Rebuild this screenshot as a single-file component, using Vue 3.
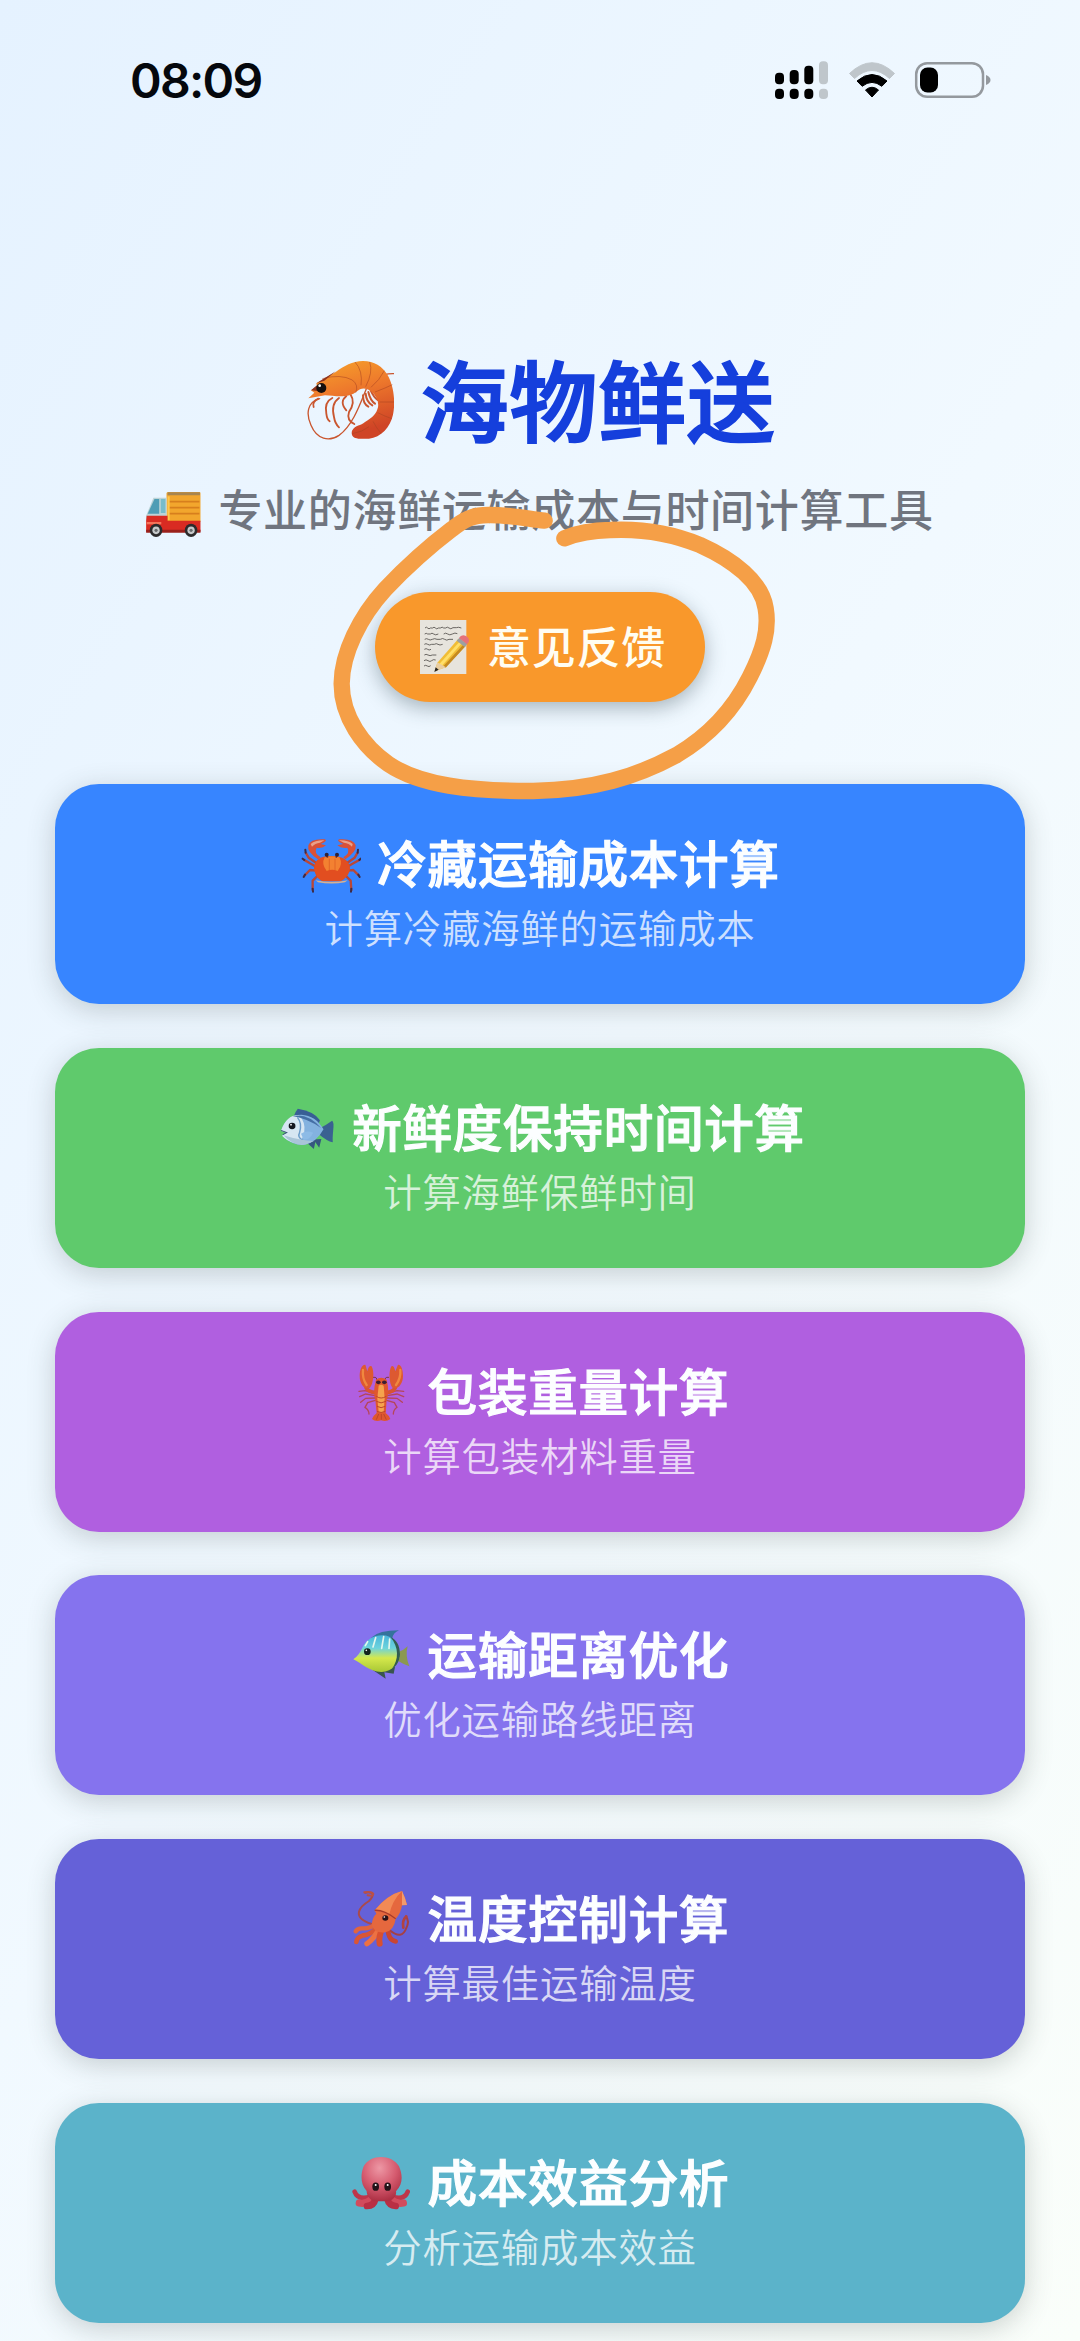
<template>
  <div class="page">
    <div class="status-bar">
      <span class="clock">08:09</span>
      <svg class="status-icons" viewBox="775 60 216 40">
        <g fill="#000">
          <rect x="775" y="72.7" width="9" height="11.500" rx="4" />
          <rect x="789.700" y="70" width="9" height="14.200" rx="4" />
          <rect x="804.300" y="65.700" width="9" height="18.500" rx="4" />
          <rect x="775" y="88.700" width="9" height="10.400" rx="4" />
          <rect x="789.700" y="88.700" width="9" height="10.400" rx="4" />
          <rect x="804.300" y="88.700" width="9" height="10.400" rx="4" />
        </g>
        <g fill="#bfc6cb">
          <rect x="819" y="61.300" width="9" height="22.900" rx="4" />
          <rect x="819" y="88.700" width="9" height="10.400" rx="4" />
          <path d="M849.5 73.5Q872 52 894.500 73.5L889.500 78.500Q872 62.500 854.500 78.500Z" stroke="#bfc6cb" stroke-width="1" stroke-linejoin="round" />
        </g>
        <path d="M857 81Q872 68 887 81L881.800 86.300Q872 78.500 862.200 86.300Z" stroke="#000" stroke-linejoin="round" />
        <path d="M865.500 90Q872 84.500 878.500 90L872 97Z" stroke="#000" stroke-linejoin="round" />
        <rect x="916.200" y="63.200" width="66.800" height="33.600" rx="11" fill="none" stroke="#94999e" stroke-width="2.500" />
        <path d="M986 75Q990.500 77 990.500 80T986 85Z" fill="#94999e" />
        <rect x="920" y="67.500" width="18" height="25" rx="7.500" fill="#000" />
      </svg>
    </div>

    <header class="header">
      <h1 class="title">
        <svg class="title-icon" viewBox="45 55 270 270">
          <defs>
            <linearGradient id="shrimp" x1="0" y1="0" x2="0.3" y2="1">
              <stop offset="0" stop-color="#f7a52b" />
              <stop offset="0.45" stop-color="#ee7a2c" />
              <stop offset="1" stop-color="#cf4426" />
            </linearGradient>
          </defs>
          <g fill="none" stroke="#c9562f" stroke-linecap="round">
            <path d="M92 180C55 190 50 225 66 260C84 303 120 310 150 290C190 262 212 200 232 150C250 118 280 104 315 105" stroke-width="4" />
            <path d="M88 180Q68 190 74 205M130 178Q105 190 112 225Q114 243 122 248M150 178Q125 195 135 235Q138 255 150 266M172 172Q150 190 172 215M185 168Q200 190 180 220Q172 245 196 256" stroke-width="5.500" />
            <path d="M222 170Q222 196 238 204M230 165Q232 190 250 200M238 160Q244 186 258 195M245 155Q254 175 266 184" stroke-width="6" />
          </g>
          <path d="M58 179L76 162L66 155L84 142L82 134L140 100C165 82 190 67 222 67C256 68 280 82 296 110C314 140 320 190 312 228C304 265 276 296 240 300L208 300C190 298 186 289 189 276C200 258 215 262 228 250C252 236 262 226 267 206C270 188 262 172 246 158C230 145 214 148 204 158C180 180 140 172 108 170Z" fill="url(#shrimp)" />
          <path d="M100 120Q155 105 190 124Q210 140 200 162M198 70Q222 96 216 140M242 70Q253 100 230 144M286 96Q272 124 246 146M310 138Q290 148 258 160M316 190Q292 190 272 190M308 240Q286 232 266 222M276 284Q262 268 252 248M190 285Q220 280 240 264" fill="none" stroke="#a94420" stroke-opacity="0.55" stroke-width="3" />
          <path d="M82 134L140 98L106 126ZM66 155L84 140L90 158Z" fill="#8e321d" />
          <ellipse cx="97" cy="148" rx="15" ry="15" fill="#17100e" />
          <circle cx="92" cy="141" r="4" fill="#fff" />
        </svg>
        <span>海物鲜送</span>
      </h1>
      <p class="subtitle">
        <svg class="subtitle-icon" viewBox="27 36 111 171" preserveAspectRatio="none">
          <path d="M72 66Q73 63 76 63H135Q137 63 137 66V152H72Z" fill="#f2a62d" />
          <path d="M74 64H136V73H74Z" fill="#a8854e" />
          <path d="M76 92H135M76 110H135M76 128H135" stroke="#d77f1d" stroke-width="5" />
          <path d="M74 76H78V148H74Z" fill="#ffc84d" />
          <path d="M47 80H72V150H33V134Z" fill="#bcd3d6" />
          <path d="M49 84H58V128H36Z" fill="#4f9db5" />
          <path d="M61 84H70V126H61Z" fill="#78bccb" />
          <path d="M34 134H74V149H137V182H33V150Z" fill="#d92b22" />
          <path d="M34 153H62V160H34Z" fill="#f5745a" />
          <path d="M33 176H137V185H33Z" fill="#9a211c" />
          <g fill="#2c2b2c">
            <ellipse cx="52" cy="178" rx="12" ry="20" />
            <ellipse cx="119" cy="178" rx="12" ry="20" />
          </g>
          <g fill="#c6c9ca">
            <ellipse cx="52" cy="178" rx="7" ry="11.500" />
            <ellipse cx="119" cy="178" rx="7" ry="11.500" />
          </g>
          <g fill="#66696b">
            <ellipse cx="52" cy="178" rx="3" ry="5" />
            <ellipse cx="119" cy="178" rx="3" ry="5" />
          </g>
        </svg>
        <span>专业的海鲜运输成本与时间计算工具</span>
      </p>
      <div class="feedback">
        <button class="feedback-button" type="button">
          <svg class="feedback-icon" viewBox="291 359 162 162">
            <path d="M300 359H439V521H300Z" fill="#e7e4dd" />
            <path d="M315 383q4-5 8 0t8 0h7q4-5 8 0t9 0h6q6-5 10 0h6q5-5 10 0t12-1h10q6-3 15 1M314 401q5-4 9 0h8q5-5 10 0t14 0M371 401q6-5 12 0t14 0t15-1M314 417q6-4 11 0t12 0t14 0h10q7-5 13 0t13 0h12M313 432q5-4 10 0t12 0h8q6-4 11 0t14 0M313 447q6-4 10 0t10 0M313 464q5-4 11 0t13 0h12M312 481q6-5 12 0t11 0t12-2M312 497q5-4 10 0t10-1" fill="none" stroke="#56524f" stroke-width="2.600" />
            <path d="M344 513L352 487L414 417L437 436L377 501Z" fill="#f1bd36" />
            <path d="M358 491L420 423L426 428L366 496Z" fill="#ffdf69" />
            <path d="M370 498L431 432L437 437L377 502Z" fill="#c58a20" />
            <path d="M344 513L352 486L378 501Z" fill="#e9cda0" />
            <path d="M343 515L347 501L356 508Z" fill="#26231f" />
            <path d="M410 421L418 412L442 431L434 440Z" fill="#9da0a1" />
            <path d="M417 413Q424 401 438 407Q450 415 446 425L441 432Z" fill="#e5727a" />
          </svg>
          <span>意见反馈</span>
        </button>
        <!-- hand-drawn ring around the button -->
        <svg class="scribble" viewBox="0 0 1410 930">
          <path d="M674 62C610 54 560 44 505 45C455 45 430 60 395 88C320 145 255 205 195 268C120 350 66 460 65 550C64 650 130 740 205 792C300 856 450 874 640 873C820 870 950 830 1070 765C1180 700 1245 620 1290 530C1330 450 1348 390 1337 325C1325 245 1240 180 1140 135C1050 98 950 86 870 90C815 91 775 98 733 115" />
        </svg>
      </div>
    </header>

    <main class="cards">
      <section v-for="card in cards" :key="card.icon" class="card" :class="'card-' + card.icon">
        <h2 class="card-title">
          <svg v-if="card.icon === 'crab'" class="card-icon" viewBox="33 45 180 180">
            <g fill="none" stroke="#b94737" stroke-width="7" stroke-linecap="round" stroke-linejoin="round">
              <path d="M78 128L56 113L47 98M78 140L60 130L43 120M78 152L60 150L44 166M84 166L68 182L68 210M172 128L194 113L203 98M172 140L190 130L208 120M172 152L190 150L206 166M166 166L182 182L184 210" />
            </g>
            <path d="M47 98l-1-9M43 120l-5-4M45 164l-4 7M68 206l1 9M203 98l1-9M208 120l4-4M205 164l4 7M184 206l-1 9" stroke="#3c2c49" stroke-width="6" stroke-linecap="round" />
            <path d="M84 118Q50 96 55 76Q62 55 104 58Q116 62 92 72L108 76Q98 86 80 83Q70 98 92 112ZM166 118Q200 96 197 76Q190 55 148 58Q136 62 160 72L142 76Q154 86 172 83Q182 98 160 112Z" fill="#d85138" />
            <path d="M62 72Q76 60 103 61L90 68Q75 69 66 80ZM188 72Q174 60 147 61L162 68Q177 69 186 80Z" fill="#e8a18b" />
            <path d="M72 143C75 116 95 108 124 108C155 108 177 119 180 143C180 163 162 180 150 184H100C84 180 73 162 72 143Z" fill="#e24e20" />
            <path d="M104 112Q126 105 148 112Q160 132 143 153Q126 146 110 153Q93 132 104 112Z" fill="#f38131" />
            <path d="M118 116V150M135 116V150" stroke="#d95721" stroke-width="2" />
            <path d="M77 181Q125 190 173 181L165 187Q125 194 84 187Z" fill="#d7b191" />
            <path d="M113 113L110 106M138 113L141 106" stroke="#762e28" stroke-width="5" />
            <circle cx="110" cy="104" r="6" fill="#342235" />
            <circle cx="141" cy="104" r="6" fill="#342235" />
          </svg>

          <svg v-else-if="card.icon === 'fish'" class="card-icon" viewBox="42 57 168 180" preserveAspectRatio="none">
            <path d="M92 108Q98 92 103 86Q150 94 165 121L158 142Z" fill="#385e95" />
            <path d="M120 180L148 207L152 186L163 203L169 177Z" fill="#35577f" />
            <path d="M162 146Q184 134 199 122Q205 124 202 153Q200 176 201 187Q185 184 162 163Z" fill="#3a6191" />
            <path d="M56 152Q72 104 113 104Q153 106 175 148Q154 190 120 195Q83 194 59 167L72 158Z" fill="#83b2df" />
            <path d="M56 152Q72 104 105 105Q126 125 121 158Q116 184 96 190Q72 183 59 167L72 158Z" fill="#d6e6f2" />
            <path d="M88 108Q132 98 168 144Q132 116 88 108Z" fill="#456fa5" />
            <path d="M102 112Q116 130 108 158Q101 172 117 181" fill="none" stroke="#6b9cca" stroke-width="4" />
            <path d="M112 161Q128 149 146 158Q135 182 119 178Z" fill="#8dbbe6" />
            <path d="M63 166Q94 202 127 193L148 183Q110 182 63 166Z" fill="#a9c5d8" />
            <path d="M56 151L72 158L61 164" fill="none" stroke="#395675" stroke-width="3" />
            <circle cx="87" cy="138" r="9.500" fill="#13161d" />
            <circle cx="84" cy="134" r="2.500" fill="#fff" />
          </svg>

          <svg v-else-if="card.icon === 'lobster'" class="card-icon" viewBox="39 39 180 180">
            <path d="M108 130L78 122L60 124M108 137L80 132L62 140M108 144L80 145L65 157M109 151L86 158L78 172Q90 180 90 192M144 130L174 122L194 124M144 137L174 132L194 140M144 144L174 145L190 157M143 151L166 158L174 172Q163 180 163 192" fill="none" stroke="#b5465a" stroke-width="4" stroke-linecap="round" />
            <path d="M112 94Q117 80 102 82M140 94Q134 80 150 82" fill="none" stroke="#7d344a" stroke-width="3" />
            <path d="M112 128Q82 127 80 107M140 128Q168 127 170 107" fill="none" stroke="#d95332" stroke-width="12" />
            <path d="M92 114C75 120 62 100 62 78C62 60 68 43 79 44L85 64Q89 46 97 48C107 62 104 101 92 114ZM161 114C178 120 192 100 192 78C192 60 187 43 177 44L169 64Q165 46 158 48C148 62 150 101 161 114Z" fill="#dd5931" />
            <path d="M72 60Q69 85 83 105M184 60Q186 85 171 105" fill="none" stroke="#f0883f" stroke-width="7" stroke-linecap="round" />
            <path d="M111 90Q126 77 143 90Q152 125 143 150L140 189Q151 197 154 207Q143 216 126 211Q109 216 99 207Q104 196 113 189L109 150Q101 125 111 90Z" fill="#df572f" />
            <path d="M119 107Q126 101 134 107L137 145L134 187H119L115 145Z" fill="#f5a34d" />
            <path d="M112 139Q126 149 142 139M112 154Q126 163 141 154M114 169Q126 177 139 169M114 184Q126 191 139 184M119 192L112 209M127 192V209M134 192L142 209" fill="none" stroke="#bd4529" stroke-width="3" />
            <ellipse cx="118" cy="97" rx="7" ry="5.500" fill="#3c1e33" />
            <ellipse cx="136" cy="97" rx="7" ry="5.500" fill="#3c1e33" />
          </svg>

          <svg v-else-if="card.icon === 'tropical'" class="card-icon" viewBox="37 51 180 180">
            <defs>
              <linearGradient id="tropical" x1="0" y1="0" x2="0" y2="1">
                <stop offset="0" stop-color="#49b5dc" />
                <stop offset="0.35" stop-color="#6dd3dc" />
                <stop offset="0.62" stop-color="#d5e84c" />
                <stop offset="1" stop-color="#a8c735" />
              </linearGradient>
            </defs>
            <path d="M94 86Q118 64 178 64Q160 72 158 88Z" fill="#35739c" />
            <path d="M96 181L138 209L134 190L162 194L166 174Z" fill="#39554f" />
            <path d="M174 130Q190 126 204 112Q196 140 209 172Q193 166 174 155Z" fill="#8b9850" />
            <path d="M41 151C54 141 61 131 68 116C80 92 101 79 128 79C158 79 180 103 181 135C181 163 158 188 126 189C92 190 68 164 41 151Z" fill="url(#tropical)" />
            <path d="M152 84C170 91 181 110 181 135C181 155 170 172 156 181C178 152 178 114 152 84Z" fill="#315d51" />
            <path d="M84 98L77 110M108 86L100 114M132 83L126 118M150 90L148 118" fill="none" stroke="#e4f7ed" stroke-width="5" stroke-linecap="round" />
            <circle cx="83" cy="128" r="10" fill="#12221e" />
            <circle cx="80" cy="124" r="2.500" fill="#fff" />
          </svg>

          <svg v-else-if="card.icon === 'squid'" class="card-icon" viewBox="37 63 180 180">
            <g fill="none" stroke-linecap="round">
              <path d="M96 165Q53 151 58 128Q62 112 88 96Q102 82 98 74Q92 68 76 71" stroke="#a94a4c" stroke-width="6" />
              <path d="M84 79Q101 82 101 75Q96 67 74 70" stroke="#bc5045" stroke-width="6" />
              <path d="M150 184Q187 214 200 177Q210 156 199 142" stroke="#a64043" stroke-width="6" />
              <path d="M191 176Q187 154 200 142" stroke="#b24341" stroke-width="8" />
              <path d="M106 166Q92 180 67 178Q53 178 48 187" stroke="#e0643f" stroke-width="13" />
              <path d="M112 174Q98 196 68 200Q52 204 50 219" stroke="#d95534" stroke-width="14" />
              <path d="M120 176Q105 208 82 224" stroke="#ed7142" stroke-width="16" />
              <path d="M130 174Q115 204 120 224" stroke="#d9502f" stroke-width="18" />
              <path d="M144 176Q145 213 168 217" stroke="#c94532" stroke-width="14" />
            </g>
            <path d="M105 124Q142 78 187 66Q197 86 202 108L187 109Q184 132 168 150Q163 184 137 190Q104 194 96 168Q98 144 110 134Z" fill="#e5683e" />
            <path d="M105 124Q142 78 187 66Q158 93 148 139Q125 124 105 124Z" fill="#f28a55" />
            <path d="M187 66Q196 84 202 108L187 109Z" fill="#f29b6d" />
            <path d="M105 124Q132 122 168 149" fill="none" stroke="#a93a2a" stroke-width="4" />
            <ellipse cx="137" cy="147" rx="9" ry="8" fill="#2a1116" />
            <circle cx="134" cy="144" r="2.500" fill="#fff" />
          </svg>

          <svg v-else class="card-icon" viewBox="37 60 180 180">
            <defs>
              <radialGradient id="octopus" cx="0.45" cy="0.25" r="0.75">
                <stop offset="0" stop-color="#ed98a5" />
                <stop offset="0.55" stop-color="#d65c70" />
                <stop offset="1" stop-color="#ad3044" />
              </radialGradient>
            </defs>
            <g fill="none" stroke-linecap="round">
              <path d="M92 188Q54 199 45 173M158 188Q195 199 204 173" stroke="#bf354a" stroke-width="14" />
              <path d="M98 193Q80 212 59 207M152 193Q170 212 191 207" stroke="#d24b5d" stroke-width="22" />
              <path d="M107 195Q103 215 82 216M143 195Q148 215 168 216" stroke="#b92f44" stroke-width="20" />
            </g>
            <path d="M81 171C60 149 64 117 72 97C92 59 157 60 178 97C188 120 192 148 169 172Q172 190 150 202H102Q80 190 81 171Z" fill="url(#octopus)" />
            <g fill="#241319">
              <ellipse cx="108" cy="158" rx="10" ry="12.500" />
              <ellipse cx="144" cy="158" rx="10" ry="12.500" />
            </g>
            <g fill="#fff">
              <circle cx="108" cy="153" r="3" />
              <circle cx="144" cy="153" r="3" />
            </g>
          </svg>
          <span>{{ card.title }}</span>
        </h2>
        <p class="card-desc">{{ card.desc }}</p>
      </section>
    </main>
  </div>
</template>

<script setup>
const cards = [
  { icon: 'crab', title: '冷藏运输成本计算', desc: '计算冷藏海鲜的运输成本' },
  { icon: 'fish', title: '新鲜度保持时间计算', desc: '计算海鲜保鲜时间' },
  { icon: 'lobster', title: '包装重量计算', desc: '计算包装材料重量' },
  { icon: 'tropical', title: '运输距离优化', desc: '优化运输路线距离' },
  { icon: 'squid', title: '温度控制计算', desc: '计算最佳运输温度' },
  { icon: 'octopus', title: '成本效益分析', desc: '分析运输成本效益' }
]
</script>

<style>
body {
  margin: 0;
}
</style>

<style scoped>
.page {
  height: 2341px;
  overflow: hidden;
  background: linear-gradient(122deg, #e5f2ff 0%, #f1f9ff 50%, #fafefa 100%);
  font-family: "Noto Sans CJK SC", sans-serif;
  letter-spacing: 0.8px;
}

.status-bar {
  display: flex;
  justify-content: space-between;
  align-items: center;
  height: 160px;
  padding: 0 89px 0 130px;
  box-sizing: border-box;
}

.clock {
  font-family: Inter, sans-serif;
  font-size: 48px;
  font-weight: 600;
  letter-spacing: -1.7px;
  color: #05080d;
}

.status-icons {
  width: 216px;
  height: 40px;
}

.header {
  display: flex;
  flex-direction: column;
  align-items: center;
  height: 624px;
  padding-top: 182px;
  box-sizing: border-box;
}

.title {
  display: flex;
  align-items: center;
  gap: 26px;
  height: 120px;
  margin: 0;
  font-size: 88px;
  font-weight: 500;
  line-height: 112px;
  color: #153fdc;
  -webkit-text-stroke: 2px #153fdc;
}

.title span {
  padding-bottom: 10px;
}

.title-icon {
  width: 90px;
  height: 90px;
}

.subtitle {
  display: flex;
  align-items: center;
  gap: 17px;
  height: 64px;
  margin: 17px 0 0;
  padding-right: 3px;
  font-size: 44px;
  font-weight: 500;
  line-height: 58px;
  letter-spacing: 0.7px;
  color: #70757f;
}

.subtitle span {
  padding-bottom: 6px;
}

.subtitle-icon {
  width: 58px;
  height: 57px;
}

.feedback {
  position: relative;
  margin-top: 49px;
}

.feedback-button {
  display: flex;
  align-items: center;
  gap: 16px;
  height: 110px;
  padding: 0 39px 0 42px;
  border: none;
  border-radius: 55px;
  background: #f9982b;
  box-shadow: 0 6px 20px rgba(40, 60, 70, 0.36);
  color: #fffdf2;
  font-family: inherit;
  font-size: 44px;
  font-weight: 500;
  letter-spacing: 0.8px;
}

.feedback-button span {
  padding-bottom: 5px;
}

.feedback-icon {
  width: 54px;
  height: 54px;
}

.scribble {
  position: absolute;
  top: -92px;
  left: -55px;
  width: 470px;
  height: 310px;
  pointer-events: none;
}

.scribble path {
  fill: none;
  stroke: #f59f47;
  stroke-width: 49;
  stroke-linecap: round;
  stroke-linejoin: round;
}

.cards {
  display: flex;
  flex-direction: column;
  gap: 43.8px;
  padding: 0 55px;
}

.card {
  height: 220px;
  padding-top: 46px;
  box-sizing: border-box;
  border-radius: 44px;
  box-shadow: 0 6px 28px rgba(50, 65, 60, 0.23);
  text-align: center;
}

.card-crab {
  background: #3785ff;
}

.card-fish {
  background: #5fca6c;
}

.card-lobster {
  background: #b05fe0;
}

.card-tropical {
  background: #8573ee;
}

.card-squid {
  background: #6561d8;
}

.card-octopus {
  background: #5bb3ca;
}

.card-title {
  display: flex;
  justify-content: center;
  align-items: center;
  gap: 16px;
  height: 70px;
  margin: 0;
  padding-left: 1px;
  font-size: 49.5px;
  font-weight: 500;
  line-height: 64px;
  color: #fcfeff;
  -webkit-text-stroke: 1.2px #fcfeff;
}

.card-title span {
  padding-bottom: 6px;
}

.card-icon {
  width: 60px;
  height: 60px;
}

.card-desc {
  margin: -3px 0 0;
  font-size: 38.4px;
  font-weight: 350;
  line-height: 58px;
  color: rgba(255, 255, 255, 0.76);
}
</style>
